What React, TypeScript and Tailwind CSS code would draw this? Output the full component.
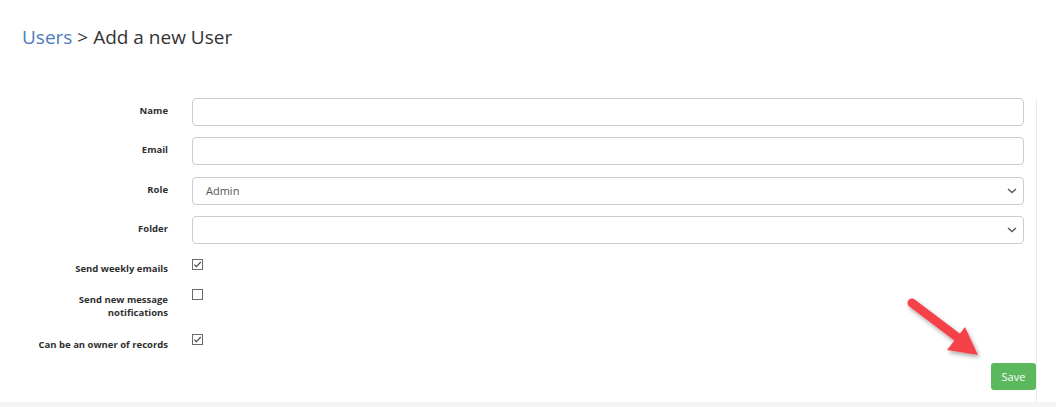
import React from "react";

const Check = ({ checked }: { checked: boolean }) => (
  <svg width="11" height="11" viewBox="0 0 11 11" className="block">
    <rect x="0.5" y="0.5" width="10" height="10" fill="#fff" stroke="#6b6b6b" strokeWidth="1" />
    {checked && <path d="M2.3 5.6 L4.3 7.6 L8.8 3" fill="none" stroke="#4a4a4a" strokeWidth="1.2" />}
  </svg>
);

const Chevron = () => (
  <svg width="10" height="6" viewBox="0 0 10 6" className="block">
    <path d="M1 1 L5 4.6 L9 1" fill="none" stroke="#555" strokeWidth="1.3" />
  </svg>
);

export default function App() {
  const label = "ml-[20px] w-[148px] shrink-0 text-right text-[9.5px] font-bold text-[#2f2f2f] leading-[13px]";
  const fieldLabel = label + " pb-[3px]";
  return (
    <div className="relative w-[1056px] h-[407px] bg-white overflow-hidden" style={{ fontFamily: '"Open Sans", sans-serif' }}>
      <h1 className="pt-[23px] pl-[22px] text-[19px] leading-[28px] text-[#333]">
        <span className="text-[#4f7bbd]">Users</span> &gt; Add a new User
      </h1>
      <div className="mt-[47px] w-[1037px] h-[304px] border-r border-[#ececec] flex flex-col">
        <div className="flex flex-col gap-[11px] pr-[12px]">
          {["Name", "Email"].map((t) => (
            <div key={t} className="flex items-center gap-[24px]">
              <div className={fieldLabel}>{t}</div>
              <div className="flex-1 h-[28px] border border-[#cccccc] rounded-[4px] bg-white" />
            </div>
          ))}
          <div className="flex items-center gap-[24px] mt-[1px]">
            <div className={fieldLabel}>Role</div>
            <div className="flex-1 h-[28px] border border-[#cccccc] rounded-[4px] bg-white flex items-center justify-between pl-[13px] pr-[6px]">
              <span className="text-[11px] text-[#555]">Admin</span>
              <Chevron />
            </div>
          </div>
          <div className="flex items-center gap-[24px]">
            <div className={fieldLabel}>Folder</div>
            <div className="flex-1 h-[28px] border border-[#cccccc] rounded-[4px] bg-white flex items-center justify-end pr-[6px]">
              <Chevron />
            </div>
          </div>
        </div>
        <div className="flex items-start gap-[24px] mt-[15px]">
          <div className={label + " pt-[3px]"}>Send weekly emails</div>
          <Check checked />
        </div>
        <div className="flex items-start gap-[24px] mt-[14px]">
          <div className={label + " pt-[4px] pl-[52px]"}>Send new message notifications</div>
          <Check checked={false} />
        </div>
        <div className="flex items-start gap-[24px] mt-[15px]">
          <div className={label + " pt-[4px]"}>Can be an owner of records</div>
          <Check checked />
        </div>
        <div className="flex-1" />
        <div className="flex justify-end mb-[12px]">
          <button className="w-[45px] h-[27px] rounded-[3px] bg-[#5cb85c] text-white text-[11px] leading-[27px]">
            Save
          </button>
        </div>
      </div>
      <div className="h-[5px] bg-[#f4f4f4]" />
      <svg className="absolute left-[895px] top-[290px]" width="100" height="80" viewBox="0 0 100 80">
        <defs>
          <filter id="sh" x="-30%" y="-30%" width="160%" height="160%">
            <feDropShadow dx="1.5" dy="2.5" stdDeviation="2" floodColor="#000" floodOpacity="0.35" />
          </filter>
        </defs>
        <g filter="url(#sh)">
          <line x1="17" y1="13" x2="62" y2="47" stroke="#f5424a" strokeWidth="9" strokeLinecap="round" />
          <polygon points="52,60 70,37 83,65" fill="#f5424a" />
        </g>
      </svg>
    </div>
  );
}
